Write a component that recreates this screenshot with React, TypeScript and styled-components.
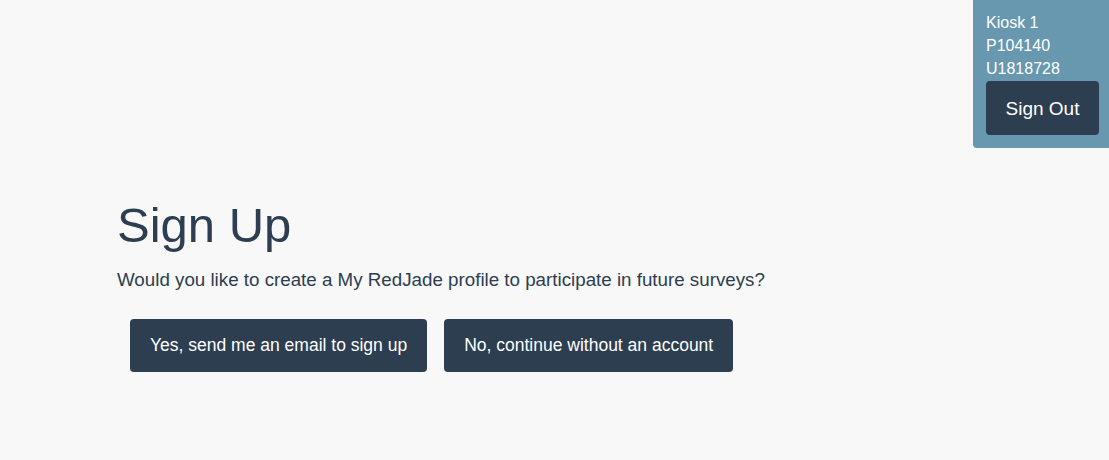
import { createGlobalStyle } from "styled-components";
import styled from "styled-components";

const GlobalStyle = createGlobalStyle`
	html, body {
		margin: 0;
		padding: 0;
		background: #f8f8f8;
		font-family: "Liberation Sans", Arial, sans-serif;
		color: #2c3e50;
	}
`;

const App = () => {
	return (
		<>
			<GlobalStyle />
			<Page>
				<KioskPanel>
					<KioskLine>Kiosk 1</KioskLine>
					<KioskLine>P104140</KioskLine>
					<KioskLine>U1818728</KioskLine>
					<DarkButton size="panel">Sign Out</DarkButton>
				</KioskPanel>
				<Content>
					<Title>Sign Up</Title>
					<Question>Would you like to create a My RedJade profile to participate in future surveys?</Question>
					<Actions>
						<DarkButton>Yes, send me an email to sign up</DarkButton>
						<DarkButton>No, continue without an account</DarkButton>
					</Actions>
				</Content>
			</Page>
		</>
	);
};

export default App;

const Page = styled.div`
	position: relative;
	width: 100%;
	height: 460px;
	overflow: hidden;
`;

const KioskPanel = styled.div`
	position: absolute;
	top: 0;
	right: 0;
	width: 136px;
	box-sizing: border-box;
	padding: 11px 10px 13px 13px;
	background: #6897b0;
	border-bottom-left-radius: 4px;
	display: flex;
	flex-direction: column;
	align-items: flex-start;
`;

const KioskLine = styled.div`
	color: #ffffff;
	font-size: 16px;
	line-height: 23px;
`;

const Content = styled.div`
	padding: 197px 0 0 117px;
	display: flex;
	flex-direction: column;
`;

const Title = styled.h1`
	margin: 0;
	font-size: 49px;
	font-weight: 400;
	line-height: 57px;
	color: #2c3e50;
`;

const Question = styled.p`
	margin: 12px 0 0;
	font-size: 18.75px;
	line-height: 27px;
	color: #2c3e50;
`;

const Actions = styled.div`
	display: flex;
	gap: 17px;
	margin-top: 26px;
	padding-left: 13px;
`;

const DarkButton = styled.button<{ size?: "panel" }>`
	background: #2c3e50;
	color: #ffffff;
	border: none;
	border-radius: 4px;
	font-family: "Liberation Sans", Arial, sans-serif;
	font-size: ${(props) => (props.size === "panel" ? "19px" : "17.5px")};
	line-height: 21px;
	white-space: nowrap;
	height: ${(props) => (props.size === "panel" ? "54px" : "53px")};
	width: ${(props) => (props.size === "panel" ? "113px" : "auto")};
	margin-top: ${(props) => (props.size === "panel" ? "1px" : "0")};
	padding: ${(props) => (props.size === "panel" ? "0" : "0 20px")};
	cursor: pointer;
`;
